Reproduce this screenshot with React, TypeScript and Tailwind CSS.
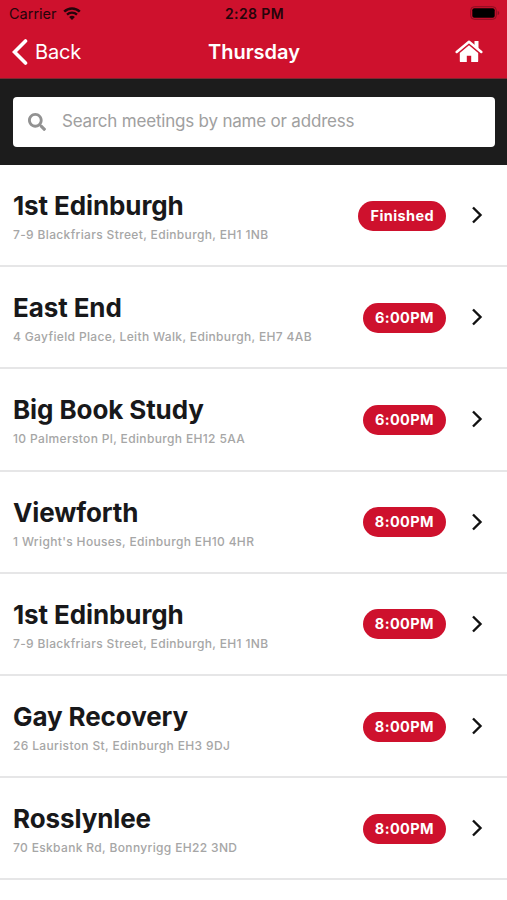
import { useState } from 'react';
import { FaSearch } from 'react-icons/fa';

interface Meeting {
  name: string;
  address: string;
  status: string;
}

const meetings: Meeting[] = [
  { name: '1st Edinburgh', address: '7-9 Blackfriars Street, Edinburgh, EH1 1NB', status: 'Finished' },
  { name: 'East End', address: '4 Gayfield Place, Leith Walk, Edinburgh, EH7 4AB', status: '6:00PM' },
  { name: 'Big Book Study', address: '10 Palmerston Pl, Edinburgh EH12 5AA', status: '6:00PM' },
  { name: 'Viewforth', address: "1 Wright's Houses, Edinburgh EH10 4HR", status: '8:00PM' },
  { name: '1st Edinburgh', address: '7-9 Blackfriars Street, Edinburgh, EH1 1NB', status: '8:00PM' },
  { name: 'Gay Recovery', address: '26 Lauriston St, Edinburgh EH3 9DJ', status: '8:00PM' },
  { name: 'Rosslynlee', address: '70 Eskbank Rd, Bonnyrigg EH22 3ND', status: '8:00PM' },
];

function StatusBar() {
  return (
    <div className="grid h-[27px] grid-cols-3 items-center pl-[9px] pr-[7px] text-[#25040a]">
      <div className="flex items-center gap-1.5">
        <span className="pt-px text-[14.5px] leading-none">Carrier</span>
        <svg viewBox="0 0 18 13" className="-mt-px h-[13px] w-[18px]">
          <path d="M1.2 4.6a11.2 11.2 0 0 1 15.6 0" fill="none" stroke="currentColor" strokeWidth="2.5" />
          <path d="M4 7.7a7.2 7.2 0 0 1 10 0" fill="none" stroke="currentColor" strokeWidth="2.3" />
          <path d="M9 13 6.1 10.1a4.2 4.2 0 0 1 5.8 0z" fill="currentColor" />
        </svg>
      </div>
      <span className="text-center text-[14px] font-semibold leading-none tracking-[0.4px]">2:28 PM</span>
      <svg viewBox="0 0 30 14" className="-mt-px h-[14px] w-[30px] justify-self-end">
        <rect x="0.7" y="0.7" width="25.6" height="12.6" rx="3.6" fill="none" stroke="#8a0e22" strokeWidth="1" />
        <rect x="2.3" y="2.3" width="22.4" height="9.4" rx="2" fill="#000" />
        <path d="M27.7 5v4c1-.4 1.5-1.1 1.5-2s-.5-1.6-1.5-2z" fill="#8a0e22" />
      </svg>
    </div>
  );
}

function HomeIcon() {
  return (
    <svg viewBox="0 0 28 23" className="h-[23px] w-[28px]">
      <path d="M1.700 12 14 1.800 26.300 12" fill="none" stroke="currentColor" strokeWidth="2.500" strokeLinecap="round" strokeLinejoin="round" />
      <path d="M19.500 1h4v8.500l-4-3.300z" fill="currentColor" />
      <path d="M14 5.300 4.800 12.900v8.300c0 .5.4.9.9.9h6.100v-6.300h4.400v6.300h6.100c.5 0 .9-.4.9-.9v-8.300z" fill="currentColor" />
    </svg>
  );
}

function NavBar() {
  return (
    <div className="grid h-[49px] grid-cols-3 items-center pl-[12px] pr-[24px] text-white">
      <button className="flex items-center gap-[7px]">
        <svg viewBox="0 0 16 26" className="h-[26px] w-[16px]">
          <path d="M13.5 2 2.5 13l11 11" fill="none" stroke="currentColor" strokeWidth="3.6" strokeLinecap="round" />
        </svg>
        <span className="text-[20px] leading-none tracking-[-0.2px]">Back</span>
      </button>
      <h1 className="pl-[13px] text-center text-[20px] font-semibold leading-none">Thursday</h1>
      <button aria-label="Home" className="justify-self-end">
        <HomeIcon />
      </button>
    </div>
  );
}

function MeetingRow({ name, address, status }: Meeting) {
  return (
    <li className="flex h-[102.2px] items-center border-b-2 border-[#e6e6e7] pl-[13px] pr-[24px]">
      <div className="flex-1 pt-[3px]">
        <h2 className="text-[26px] font-bold leading-8 tracking-[-0.1px] text-[#18181a]">{name}</h2>
        <p className="mt-[5px] text-[12px] font-medium leading-4 tracking-[0.35px] text-[#a6a6a6]">{address}</p>
      </div>
      <span className="mt-px flex h-[30px] items-center rounded-full bg-[#ce112d] px-[12px] text-[14.5px] font-bold tracking-[0.4px] text-white">
        {status}
      </span>
      <svg viewBox="0 0 12 18" className="ml-[25px] h-[18px] w-[12px] text-[#111]">
        <path d="m2 1.500 7.500 7.500L2 16.500" fill="none" stroke="currentColor" strokeWidth="2.400" />
      </svg>
    </li>
  );
}

export default function App() {
  const [query, setQuery] = useState('');

  return (
    <div className="h-[900px] overflow-hidden bg-white font-['Inter',sans-serif]">
      <header className="h-[79px] border-b border-[#7d2730] bg-[#ce112d]">
        <StatusBar />
        <NavBar />
      </header>

      {/* Search */}
      <div className="h-[86px] bg-[#1c1c1c] pl-[13px] pr-[12px] pt-[18px]">
        <label className="flex h-[50px] items-center rounded-[4px] bg-white pl-[15px]">
          <FaSearch className="size-[18px] text-[#929292]" />
          <input
            value={query}
            onChange={(e) => setQuery(e.target.value)}
            placeholder="Search meetings by name or address"
            className="ml-[16px] flex-1 text-[17px] tracking-[-0.2px] outline-none placeholder:text-[#a0a0a0]"
          />
        </label>
      </div>

      <ul>
        {meetings.map((meeting, index) => (
          <MeetingRow key={index} {...meeting} />
        ))}
      </ul>
    </div>
  );
}
